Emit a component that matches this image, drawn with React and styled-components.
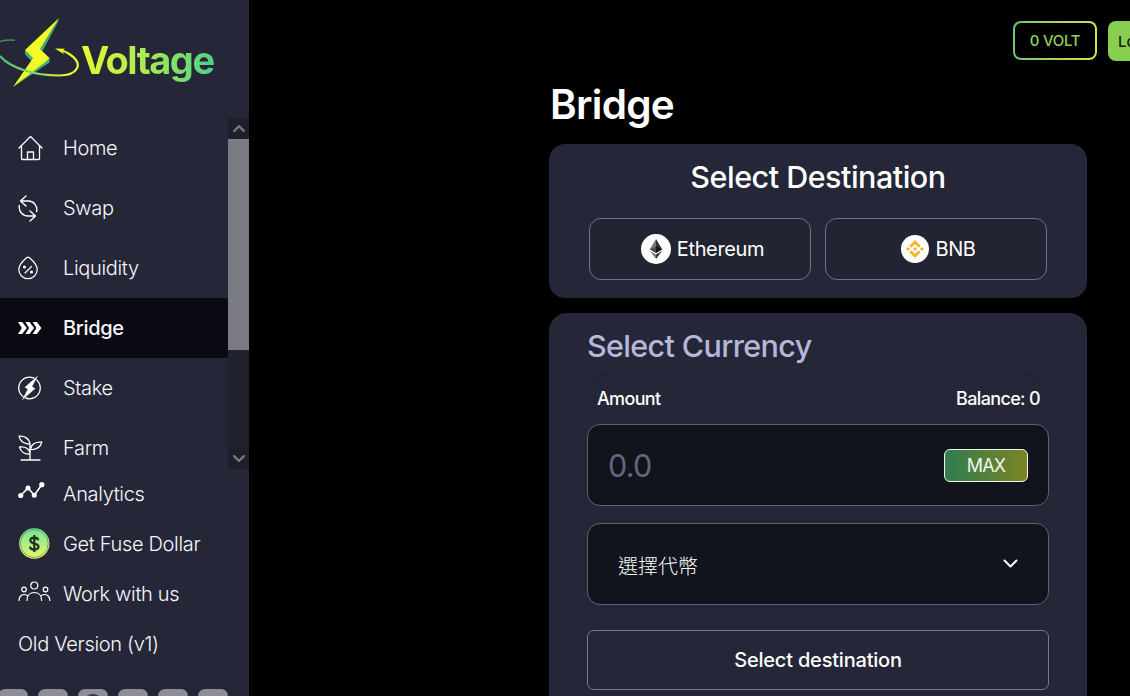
import React, { useState } from 'react'
import styled, { createGlobalStyle } from 'styled-components'


const GlobalStyle = createGlobalStyle`
    * {
        box-sizing: border-box;
    }
    body {
        margin: 0;
        background: #000;
        color: #fff;
        font-family: Inter, "Noto Sans CJK TC", sans-serif;
        overflow: hidden;
    }
    button, input {
        font-family: inherit;
        color: inherit;
    }
`

const Page = styled.div`
    display: flex;
    height: 696px;
    overflow: hidden;
`

const Sidebar = styled.aside`
    flex: none;
    display: flex;
    flex-direction: column;
    width: 249px;
    height: 696px;
    overflow: hidden;
    background: #252637;
`

const Brand = styled.div`
    flex: none;
    display: flex;
    height: 118px;
    svg {
        flex: none;
    }
`

const BrandName = styled.span`
    align-self: flex-start;
    margin: 36px 0 0 1px;
    padding-right: 2px;
    font-size: 38px;
    line-height: 48px;
    font-weight: 700;
    letter-spacing: -1.5px;
    background: linear-gradient(90deg, #e6fb2c 0%, #a5ea55 50%, #4bd186 100%);
    background-clip: text;
    -webkit-background-clip: text;
    color: transparent;
`

const MenuArea = styled.div`
    flex: none;
    display: flex;
    height: 351px;
    overflow: hidden;
`

const Menu = styled.nav`
    flex: 1;
`

const MenuItem = styled.a`
    flex: none;
    display: flex;
    align-items: center;
    height: ${props => props.$small ? '50px' : '60px'};
    padding-left: 18px;
    font-size: 20px;
    font-weight: ${props => props.$active ? 500 : 300};
    letter-spacing: -0.33px;
    color: #f7f7fb;
    background: ${props => props.$active ? '#0a0b12' : 'transparent'};
    cursor: pointer;
`

const MenuIcon = styled.span`
    flex: none;
    display: flex;
    width: 45px;
`

const ScrollTrack = styled.div`
    display: flex;
    flex-direction: column;
    width: 21px;
    background: #20212d;
`

const ScrollArrow = styled.div`
    display: flex;
    align-items: center;
    justify-content: center;
    height: 21px;
    background: #1e1f2a;
`

const ScrollThumb = styled.div`
    height: 211px;
    margin-bottom: auto;
    background: #7b7b83;
`

const Socials = styled.div`
    flex: none;
    display: flex;
    gap: 10px;
    margin: 20px 0 0 -2px;
`

const Social = styled.a`
    flex: none;
    width: 30px;
    height: 30px;
    border-radius: 7px;
    background: #8d8e97;
    overflow: hidden;
    svg {
        display: block;
    }
`

const Main = styled.main`
    flex: 1;
    min-width: 0;
    overflow: hidden;
`

const Header = styled.header`
    display: flex;
    height: 61px;
    padding: 21px 0 0 764px;
    gap: 11px;
`

const VoltButton = styled.button`
    flex: none;
    width: 84px;
    height: 39px;
    padding: 0;
    border: 2px solid transparent;
    border-radius: 8px;
    background: linear-gradient(#000, #000) padding-box,
        linear-gradient(90deg, #78c07a, #a3d95a 50%, #d9e04a) border-box;
    font-size: 15px;
    font-weight: 500;
    letter-spacing: -0.3px;
    color: #8fd257;
`

const LoginButton = styled.button`
    flex: none;
    width: 120px;
    height: 40px;
    padding: 0 0 0 10px;
    border: none;
    border-radius: 8px;
    background: #88ce4f;
    text-align: left;
    font-size: 15px;
    font-weight: 500;
    color: #14180f;
`

const Content = styled.section`
    width: 538px;
    margin-left: 300px;
`

const Title = styled.h1`
    margin: 0;
    padding: 19px 0 0 1px;
    height: 83px;
    font-size: 40.500px;
    line-height: 50px;
    font-weight: 600;
    letter-spacing: -0.7px;
`

const DestinationCard = styled.div`
    height: 154px;
    padding: 14px 40px 18px;
    border-radius: 16px;
    background: #252637;
`

const CardTitle = styled.h2`
    margin: 0 0 22px;
    font-size: 30.500px;
    line-height: 38px;
    font-weight: 500;
    text-align: center;
    letter-spacing: -0.5px;
`

const Chains = styled.div`
    display: grid;
    grid-template-columns: 1fr 1fr;
    gap: 14px;
`

const ChainButton = styled.button`
    display: flex;
    align-items: center;
    justify-content: center;
    gap: 6px;
    height: 62px;
    padding: 0 0 0 5px;
    border: 1px solid #73747e;
    border-radius: 12px;
    background: #232433;
    font-size: 20px;
    font-weight: 400;
    letter-spacing: -0.35px;
    cursor: pointer;
`

const CurrencyCard = styled.div`
    height: 400px;
    margin-top: 15px;
    padding: 14px 38px 0;
    border-radius: 18px;
    background: #252637;
`

const CurrencyTitle = styled.h2`
    margin: 0;
    height: 47px;
    font-size: 30.500px;
    line-height: 38px;
    font-weight: 500;
    letter-spacing: -0.65px;
    color: #b5b7da;
`

const AmountHead = styled.div`
    position: relative;
    display: flex;
    justify-content: space-between;
    height: 50px;
    padding: 14px 9px 0 10px;
    font-size: 18px;
    line-height: 22px;
    font-weight: 500;
    letter-spacing: -0.65px;
    &::before, &::after {
        content: '';
        position: absolute;
        top: 0;
        width: 23px;
        height: 23px;
        border-top: 1px solid #1e1f2d;
    }
    &::before {
        left: 0;
        border-top-left-radius: 23px;
    }
    &::after {
        right: 0;
        border-top-right-radius: 23px;
    }
`

const Field = styled.div`
    display: flex;
    align-items: center;
    justify-content: space-between;
    height: 82px;
    border: 1px solid #5f606c;
    border-radius: 13px;
    background: #12141d;
`

const AmountField = styled(Field)`
    padding: 0 20px;
`

const TokenField = styled(Field)`
    margin-top: 17px;
    padding: 2px 30px 0;
    font-family: "Noto Sans CJK TC", sans-serif;
    font-size: 20px;
    font-weight: 300;
    cursor: pointer;
    svg {
        margin-top: -4px;
    }
`

const AmountInput = styled.input`
    width: 250px;
    height: 44px;
    padding: 0;
    border: none;
    outline: none;
    background: transparent;
    font-size: 30.500px;
    font-weight: 400;
    letter-spacing: -0.7px;
    &::placeholder {
        color: #63657b;
        opacity: 1;
    }
`

const MaxButton = styled.button`
    width: 84px;
    height: 33px;
    padding: 0;
    border: 1px solid #f1f5ec;
    border-radius: 6px;
    background: linear-gradient(90deg, #2f7d50, #7b8524);
    font-size: 18px;
    letter-spacing: -0.9px;
    color: #f1f6ec;
`

const SubmitButton = styled.button`
    display: block;
    width: 100%;
    height: 60px;
    margin-top: 25px;
    padding: 0;
    border: 1px solid #777884;
    border-radius: 7px;
    background: transparent;
    font-size: 20px;
    font-weight: 500;
    letter-spacing: -0.2px;
`

const Logo = () => (
    <svg width="80" height="100" viewBox="0 0 80 100" fill="none">
        <defs>
            <linearGradient id="orbit" x1="0" y1="0" x2="80" y2="0" gradientUnits="userSpaceOnUse">
                <stop offset="0" stopColor="#4fba78" />
                <stop offset="0.5" stopColor="#8cdc5c" />
                <stop offset="0.85" stopColor="#e8fa2d" />
            </linearGradient>
        </defs>
        <path d="M0 41.500Q7 39.500 15 40.200" stroke="#3f8d63" strokeWidth="1.400" />
        <path d="M25 50v4.500l6 6 3-3zM59 18l-1 4-15.500 29-3-2zM49.500 58v4.500L13 87z" fill="#3caf80" />
        <path d="M59 18 25 50l8 8L13 87l33-25.500 3.500-3.500-9.500-9z" fill="#f2fb25" />
        <path d="M0 56C10 68 35 75.500 59 75.500C78 75.500 84 64 70 54.500Q66 51.500 60 50" stroke="url(#orbit)" strokeWidth="2.200" />
        <path d="M55 48.500l10 .2-3 2.300 2.500 3.500z" fill="#f2fb25" />
    </svg>
)

const HomeIcon = () => (
    <svg width="25" height="26" viewBox="0 0 25 26" fill="none" stroke="#fff" strokeWidth="1.300" strokeLinecap="round" strokeLinejoin="round">
        <path d="M1 13 12.500 1.500 24 13M3.500 11v12.500q0 1 1 1h16q1 0 1-1V11M9.500 24.500v-7.500h6v7.500" />
    </svg>
)

const SwapIcon = () => (
    <svg width="21" height="28" viewBox="0 0 21 28" fill="none" stroke="#fff" strokeWidth="1.400" strokeLinecap="round" strokeLinejoin="round">
        <path d="M8 2 2.500 7 8 12M2.500 7h8A8.600 8.600 0 0 1 18.600 17.500M12 17l5.500 5-5.500 5M17.500 22h-7A9 9 0 0 1 1.300 11.500" />
    </svg>
)

const LiquidityIcon = () => (
    <svg width="20" height="24" viewBox="0 0 20 24" fill="none" stroke="#fff" strokeWidth="1.200" strokeLinecap="round">
        <path d="M8.500 1.700q1.500-1.200 3 0C16 5.500 19.200 9 19.200 13.500a9.200 9.200 0 0 1-18.400 0C.8 9 4 5.500 8.500 1.700zM7 17l6.500-6.500" />
        <circle cx="6.500" cy="11" r=".9" fill="#fff" />
        <circle cx="13.500" cy="16" r=".9" fill="#fff" />
    </svg>
)

const BridgeIcon = () => (
    <svg width="24" height="14" viewBox="0 0 24 14" fill="#fff">
        <path d="M0 1h4.200L8.800 7l-4.600 6H0l3.800-6z" />
        <path d="M7.300 1h4.200l4.600 6-4.600 6H7.300l3.800-6z" />
        <path d="M14.600 1h4.200l4.600 6-4.600 6h-4.200l3.800-6z" />
    </svg>
)

const StakeIcon = () => (
    <svg width="24" height="26" viewBox="0 0 24 26">
        <circle cx="11.500" cy="13" r="10.800" fill="none" stroke="#fff" strokeWidth="1.200" />
        <path d="M20.500 0 6.500 12.300l3 2L3.500 25.800l14-12.300-3.200-2z" fill="#fff" stroke="#252637" strokeWidth=".3" />
    </svg>
)

const FarmIcon = () => (
    <svg width="25" height="26" viewBox="0 0 25 26" fill="none" stroke="#fff" strokeWidth="1.300" strokeLinecap="round" strokeLinejoin="round">
        <path d="M3 25h19M12 25V9M12 9C11 3 6 .5 1 1.200 2 6 6 9.500 12 9zM12 19c0-5-5-8-10.500-7C2.500 16 6 19.500 12 19zM12.500 14.500C13 9 18 6.500 23.800 7.200 23 12 18 15 12.500 14.500z" />
    </svg>
)

const AnalyticsIcon = () => (
    <svg width="27" height="18" viewBox="0 0 27 18" fill="#fff">
        <path d="M2.700 13.500 10 6l6.300 7.300 7.500-10.600" fill="none" stroke="#fff" strokeWidth="1.600" />
        <circle cx="2.700" cy="13.500" r="2.600" />
        <circle cx="10" cy="6" r="2.500" />
        <circle cx="16.300" cy="13.300" r="2.500" />
        <circle cx="23.800" cy="2.700" r="2.600" />
    </svg>
)

const DollarIcon = () => (
    <svg width="32" height="32" viewBox="0 0 32 32" fill="none">
        <defs>
            <linearGradient id="coin" x1="0" y1="0" x2="0" y2="1">
                <stop offset="0" stopColor="#72e49a" />
                <stop offset="1" stopColor="#e9f86b" />
            </linearGradient>
        </defs>
        <circle cx="16.300" cy="15.500" r="15.200" fill="url(#coin)" />
        <circle cx="16.300" cy="15.500" r="13.900" stroke="#6a8b55" strokeWidth=".8" />
        <path d="M20.300 12.300c-.4-1.700-1.800-2.600-4-2.600-2.400 0-4 1.100-4 2.900 0 4.200 8.200 1.700 8.200 6 0 1.900-1.700 3-4.200 3s-4.100-1.100-4.400-3M16.300 7v17" stroke="#20331f" strokeWidth="2.200" />
    </svg>
)

const TeamIcon = () => (
    <svg width="33" height="21" viewBox="0 0 33 21" fill="none" stroke="#fff" strokeWidth="1.200" strokeLinecap="round">
        <circle cx="16.300" cy="4.500" r="3.500" />
        <circle cx="6" cy="8.500" r="2.300" />
        <circle cx="27.500" cy="8.500" r="2.300" />
        <path d="M9 19.500c0-5 3-8 7.300-8s7.300 3 7.300 8M1 19.500c0-5 4-7.500 8.300-5M31.800 19.500c0-5-4-7.500-8.300-5" />
    </svg>
)

const RaisedIcon = styled.span`
    display: flex;
    padding-bottom: 6px;
`

const EthereumIcon = () => (
    <svg width="30" height="30" viewBox="0 0 30 30">
        <circle cx="15" cy="15" r="15" fill="#fff" />
        <path d="M15 5 8.800 15.300 15 19z" fill="#777" />
        <path d="M15 5l6.200 10.300L15 19z" fill="#333" />
        <path d="M15 12.500 8.800 15.300 15 19z" fill="#4b4b4b" />
        <path d="M15 12.500l6.200 2.800L15 19z" fill="#161616" />
        <path d="M8.800 16.700 15 20.400V25z" fill="#777" />
        <path d="M21.200 16.700 15 20.400V25z" fill="#333" />
    </svg>
)

const BnbIcon = () => (
    <svg width="28" height="28" viewBox="0 0 28 28">
        <circle cx="14" cy="14" r="14" fill="#fff" />
        <g fill="#f0b92d">
            <path d="M14 5l5.700 5.700-2.100 2.100L14 9.200l-3.600 3.600-2.100-2.100zM14 23l5.700-5.700-2.100-2.100L14 18.800l-3.600-3.600-2.100 2.100z" />
            <path d="M14 11.900l2.100 2.100-2.100 2.100-2.100-2.100zM7 11.900 9.100 14 7 16.100 4.900 14zM21 11.900l2.100 2.100-2.100 2.100-2.100-2.100z" />
        </g>
    </svg>
)

const Chevron = ({ up, width, color, stroke = 2 }) => (
    <svg width={width} height={width * 0.6} viewBox="0 0 15 9" fill="none" stroke={color} strokeWidth={stroke} strokeLinecap="round" strokeLinejoin="round">
        <path d={up ? 'M1.500 7.500l6-6 6 6' : 'M1.500 1.500l6 6 6-6'} />
    </svg>
)

const menu = [
    { name: 'Home', icon: <HomeIcon /> },
    { name: 'Swap', icon: <SwapIcon /> },
    { name: 'Liquidity', icon: <LiquidityIcon /> },
    { name: 'Bridge', icon: <BridgeIcon /> },
    { name: 'Stake', icon: <StakeIcon /> },
    { name: 'Farm', icon: <FarmIcon /> },
]

const links = [
    { name: 'Analytics', icon: <RaisedIcon><AnalyticsIcon /></RaisedIcon> },
    { name: 'Get Fuse Dollar', icon: <DollarIcon /> },
    { name: 'Work with us', icon: <RaisedIcon><TeamIcon /></RaisedIcon> },
    { name: 'Old Version (v1)' },
]

const socials = ['twitter', 'telegram', 'github', 'discord', 'medium', 'docs']


function App() {
    const [page, setPage] = useState('Bridge')
    const [amount, setAmount] = useState('')

    const amountHandler = (event) => {
        setAmount(event.target.value)
    }

    return (
        <Page>
            <GlobalStyle />
            <Sidebar>
                <Brand>
                    <Logo />
                    <BrandName>Voltage</BrandName>
                </Brand>
                <MenuArea>
                    <Menu>
                        {menu.map((item) => (
                            <MenuItem key={item.name} $active={item.name === page} onClick={() => setPage(item.name)}>
                                <MenuIcon>{item.icon}</MenuIcon>
                                {item.name}
                            </MenuItem>
                        ))}
                    </Menu>
                    <ScrollTrack>
                        <ScrollArrow><Chevron up width={12} stroke={3} color="#77777d" /></ScrollArrow>
                        <ScrollThumb />
                        <ScrollArrow><Chevron width={12} stroke={3} color="#77777d" /></ScrollArrow>
                    </ScrollTrack>
                </MenuArea>
                {links.map((item) => (
                    <MenuItem key={item.name} $small>
                        {item.icon && <MenuIcon>{item.icon}</MenuIcon>}
                        {item.name}
                    </MenuItem>
                ))}
                <Socials>
                    {socials.map((name) => (
                        <Social key={name}>
                            {name === 'github' && (
                                <svg width="30" height="30" viewBox="0 0 30 30">
                                    <circle cx="15" cy="15" r="10" fill="#3a3b49" />
                                </svg>
                            )}
                        </Social>
                    ))}
                </Socials>
            </Sidebar>
            <Main>
                <Header>
                    <VoltButton>0 VOLT</VoltButton>
                    <LoginButton>Login</LoginButton>
                </Header>
                <Content>
                    <Title>Bridge</Title>
                    <DestinationCard>
                        <CardTitle>Select Destination</CardTitle>
                        <Chains>
                            <ChainButton><EthereumIcon />Ethereum</ChainButton>
                            <ChainButton><BnbIcon />BNB</ChainButton>
                        </Chains>
                    </DestinationCard>
                    <CurrencyCard>
                        <CurrencyTitle>Select Currency</CurrencyTitle>
                        <AmountHead>
                            <span>Amount</span>
                            <span>Balance: 0</span>
                        </AmountHead>
                        <AmountField>
                            <AmountInput placeholder="0.0" value={amount} onChange={amountHandler} />
                            <MaxButton>MAX</MaxButton>
                        </AmountField>
                        <TokenField>
                            <span>選擇代幣</span>
                            <Chevron width={15} color="#fff" />
                        </TokenField>
                        <SubmitButton>Select destination</SubmitButton>
                    </CurrencyCard>
                </Content>
            </Main>
        </Page>
    )
}

export default App
